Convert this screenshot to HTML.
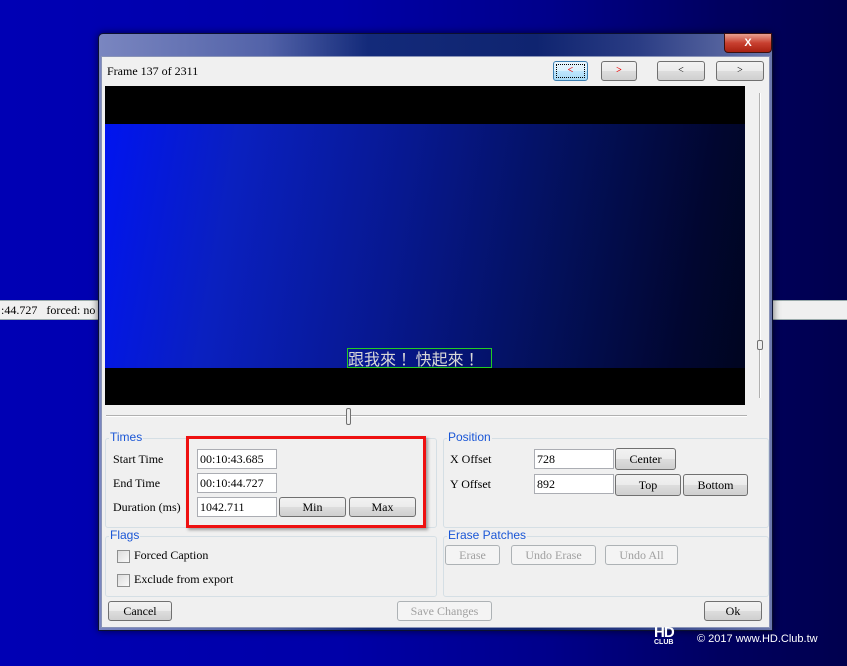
<!DOCTYPE html>
<html><head><meta charset="utf-8"><style>
*{margin:0;padding:0;box-sizing:border-box}
body{width:847px;height:666px;overflow:hidden;position:relative;font-family:"Liberation Serif",serif;font-size:12px;color:#000;
background:linear-gradient(90deg,#0000b4 0%,#0000a8 40%,#00008a 65%,#000060 85%,#00004e 100%);}
.abs{position:absolute}
.strip{position:absolute;top:300px;height:20px;background:#f0f0f0;border-top:1px solid #9aa;border-bottom:1px solid #9aa}
.win{position:absolute;left:98px;top:33px;width:675px;height:598px;border:1px solid #0b1030;border-radius:5px 5px 0 0;
background:linear-gradient(90deg,#7a86c0 0%,#5262a8 25%,#132a7a 40%,#0f2470 65%,#2a3c84 80%,#6c78ac 100%);box-shadow:0 0 8px rgba(0,0,0,.6)}
.client{position:absolute;left:2px;top:22px;width:669px;height:572px;background:#f0f0f0;border:1px solid #8a94b8}
.btn{position:absolute;height:20px;border:1px solid #707070;border-radius:3px;background:linear-gradient(#f2f2f2 0%,#ebebeb 50%,#dddddd 51%,#cfcfcf 100%);text-align:center;line-height:18px;font-size:12px}
.dis{color:#a0a0a0;border-color:#adb2b5;background:#f4f4f4}
.grp{position:absolute;border:1px solid #d5dfe5;border-radius:3px}
.gl{position:absolute;top:-9px;left:3px;background:#f0f0f0;color:#1a56d6;font-family:"Liberation Sans",sans-serif;font-size:12px;padding:0 1px}
.tb{position:absolute;height:20px;background:#fff;border:1px solid #abadb3;padding-left:2px;line-height:18px}
.lbl{position:absolute}
.cb{position:absolute;width:13px;height:13px;border:1px solid #8e8f8f;background:linear-gradient(135deg,#dcdcdc,#fafafa)}
</style></head><body>
<div class="strip" style="left:0;width:99px"><span style="position:absolute;left:1px;top:2px;font-size:12px">:44.727&nbsp;&nbsp;&nbsp;forced: no</span></div>
<div class="strip" style="left:772px;width:75px"></div>

<div class="win">
 <div class="abs" style="left:625px;top:-1px;width:48px;height:20px;border:1px solid #3a1010;border-radius:0 0 4px 4px;background:linear-gradient(#e8a090,#c84030 50%,#a82010);color:#fff;font-family:'Liberation Sans',sans-serif;font-weight:bold;font-size:11px;text-align:center;line-height:18px">X</div>
 <div class="client">
  <div class="lbl" style="left:5px;top:7px">Frame 137 of 2311</div>
  <div class="btn" style="left:451px;top:4px;width:35px;border-color:#3c7fb1;background:linear-gradient(#eaf6fd,#d9f0fc 50%,#bee6fd 51%,#a7d9f5);color:#e00;font-weight:bold;font-size:10px"><span style="display:block;margin:2px;border:1px dotted #000;line-height:12px">&lt;</span></div>
  <div class="btn" style="left:499px;top:4px;width:36px;color:#e00;font-weight:bold;font-size:10px">&gt;</div>
  <div class="btn" style="left:555px;top:4px;width:48px;font-size:10px">&lt;</div>
  <div class="btn" style="left:614px;top:4px;width:48px;font-size:10px">&gt;</div>
  <!-- video -->
  <div class="abs" style="left:3px;top:29px;width:640px;height:319px;background:#000">
   <div class="abs" style="left:0;top:38px;width:640px;height:244px;background:linear-gradient(100deg,#0014f0 0%,#0a20c0 20%,#071890 45%,#03105a 70%,#010630 90%,#000520 100%)"></div>
   <div class="abs" style="left:242px;top:262px;width:145px;height:20px;border:1px solid #22cc22;color:#d8d8d8;font-family:'Noto Sans CJK TC','WenQuanYi Zen Hei',sans-serif;font-size:16px;line-height:18px;white-space:nowrap">跟我來！ 快起來！</div>
  </div>
  <!-- sliders -->
  <div class="abs" style="left:4px;top:358px;width:641px;height:2px;border-top:1px solid #b0b0b0;border-bottom:1px solid #fff"></div>
  <div class="abs" style="left:244px;top:351px;width:5px;height:17px;border:1px solid #707070;border-radius:2px;background:#eee"></div>
  <div class="abs" style="left:657px;top:36px;width:2px;height:305px;border-left:1px solid #b0b0b0;border-right:1px solid #fff"></div>
  <div class="abs" style="left:655px;top:283px;width:6px;height:10px;border:1px solid #707070;border-radius:2px;background:#eee"></div>
  <!-- Times -->
  <div class="grp" style="left:3px;top:381px;width:332px;height:90px"><span class="gl">Times</span></div>
  <div class="lbl" style="left:11px;top:395px">Start Time</div>
  <div class="lbl" style="left:11px;top:419px">End Time</div>
  <div class="lbl" style="left:11px;top:443px">Duration (ms)</div>
  <div class="tb" style="left:95px;top:392px;width:80px">00:10:43.685</div>
  <div class="tb" style="left:95px;top:416px;width:80px">00:10:44.727</div>
  <div class="tb" style="left:95px;top:440px;width:80px">1042.711</div>
  <div class="btn" style="left:177px;top:440px;width:67px">Min</div>
  <div class="btn" style="left:247px;top:440px;width:67px">Max</div>
  <div class="abs" style="left:84px;top:379px;width:240px;height:92px;border:3px solid #ee1111;box-shadow:2px 2px 3px rgba(0,0,0,.35)"></div>
  <!-- Position -->
  <div class="grp" style="left:341px;top:381px;width:326px;height:90px"><span class="gl">Position</span></div>
  <div class="lbl" style="left:348px;top:395px">X Offset</div>
  <div class="lbl" style="left:348px;top:420px">Y Offset</div>
  <div class="tb" style="left:432px;top:392px;width:80px">728</div>
  <div class="tb" style="left:432px;top:417px;width:80px">892</div>
  <div class="btn" style="left:513px;top:391px;width:61px;height:22px;line-height:20px">Center</div>
  <div class="btn" style="left:513px;top:417px;width:66px;height:22px;line-height:20px">Top</div>
  <div class="btn" style="left:581px;top:417px;width:65px;height:22px;line-height:20px">Bottom</div>
  <!-- Flags -->
  <div class="grp" style="left:3px;top:479px;width:332px;height:61px"><span class="gl">Flags</span></div>
  <div class="cb" style="left:15px;top:493px"></div><div class="lbl" style="left:32px;top:491px">Forced Caption</div>
  <div class="cb" style="left:15px;top:517px"></div><div class="lbl" style="left:32px;top:515px">Exclude from export</div>
  <!-- Erase -->
  <div class="grp" style="left:341px;top:479px;width:326px;height:61px"><span class="gl">Erase Patches</span></div>
  <div class="btn dis" style="left:343px;top:488px;width:55px">Erase</div>
  <div class="btn dis" style="left:409px;top:488px;width:85px">Undo Erase</div>
  <div class="btn dis" style="left:503px;top:488px;width:73px">Undo All</div>
  <!-- bottom -->
  <div class="btn" style="left:6px;top:544px;width:64px">Cancel</div>
  <div class="btn dis" style="left:295px;top:544px;width:95px">Save Changes</div>
  <div class="btn" style="left:602px;top:544px;width:58px">Ok</div>
 </div>
</div>
<div class="abs" style="left:654px;top:627px;color:#fff;font-family:'Liberation Sans',sans-serif;font-weight:bold;font-size:15px;line-height:12px;letter-spacing:-1px">HD</div>
<div class="abs" style="left:654px;top:639px;color:#fff;font-family:'Liberation Sans',sans-serif;font-size:7px;font-weight:bold">CLUB</div>
<div class="abs" style="left:697px;top:633px;color:#fff;font-family:'Liberation Sans',sans-serif;font-size:11px">© 2017 www.HD.Club.tw</div>
</body></html>
